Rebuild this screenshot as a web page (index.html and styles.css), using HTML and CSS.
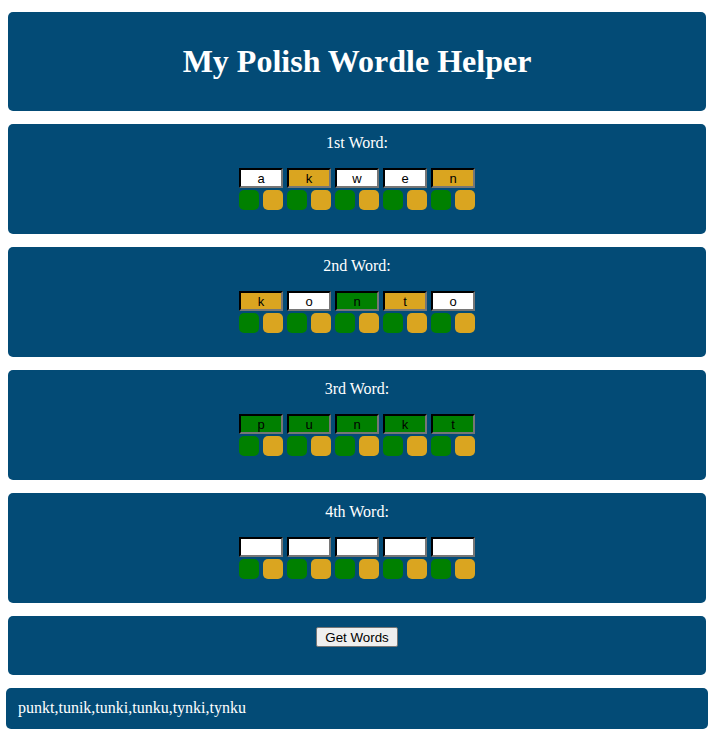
FILE: index.html
```html
<!DOCTYPE html>
<html>
<head>
<meta charset="utf-8">
<title>My Polish Wordle Helper</title>
<link rel="stylesheet" href="styles.css">
</head>
<body>
<main class="page">
  <header class="card header">
    <h1 class="title">My Polish Wordle Helper</h1>
  </header>

  <section class="card word-card">
    <div class="label">1st Word:</div>
    <div class="row">
      <div class="col"><input class="letter white" value="a"><div class="marks"><span class="sq green"></span><span class="sq gold"></span></div></div>
      <div class="col"><input class="letter gold" value="k"><div class="marks"><span class="sq green"></span><span class="sq gold"></span></div></div>
      <div class="col"><input class="letter white" value="w"><div class="marks"><span class="sq green"></span><span class="sq gold"></span></div></div>
      <div class="col"><input class="letter white" value="e"><div class="marks"><span class="sq green"></span><span class="sq gold"></span></div></div>
      <div class="col"><input class="letter gold" value="n"><div class="marks"><span class="sq green"></span><span class="sq gold"></span></div></div>
    </div>
  </section>

  <section class="card word-card">
    <div class="label">2nd Word:</div>
    <div class="row">
      <div class="col"><input class="letter gold" value="k"><div class="marks"><span class="sq green"></span><span class="sq gold"></span></div></div>
      <div class="col"><input class="letter white" value="o"><div class="marks"><span class="sq green"></span><span class="sq gold"></span></div></div>
      <div class="col"><input class="letter green" value="n"><div class="marks"><span class="sq green"></span><span class="sq gold"></span></div></div>
      <div class="col"><input class="letter gold" value="t"><div class="marks"><span class="sq green"></span><span class="sq gold"></span></div></div>
      <div class="col"><input class="letter white" value="o"><div class="marks"><span class="sq green"></span><span class="sq gold"></span></div></div>
    </div>
  </section>

  <section class="card word-card">
    <div class="label">3rd Word:</div>
    <div class="row">
      <div class="col"><input class="letter green" value="p"><div class="marks"><span class="sq green"></span><span class="sq gold"></span></div></div>
      <div class="col"><input class="letter green" value="u"><div class="marks"><span class="sq green"></span><span class="sq gold"></span></div></div>
      <div class="col"><input class="letter green" value="n"><div class="marks"><span class="sq green"></span><span class="sq gold"></span></div></div>
      <div class="col"><input class="letter green" value="k"><div class="marks"><span class="sq green"></span><span class="sq gold"></span></div></div>
      <div class="col"><input class="letter green" value="t"><div class="marks"><span class="sq green"></span><span class="sq gold"></span></div></div>
    </div>
  </section>

  <section class="card word-card">
    <div class="label">4th Word:</div>
    <div class="row">
      <div class="col"><input class="letter white" value=""><div class="marks"><span class="sq green"></span><span class="sq gold"></span></div></div>
      <div class="col"><input class="letter white" value=""><div class="marks"><span class="sq green"></span><span class="sq gold"></span></div></div>
      <div class="col"><input class="letter white" value=""><div class="marks"><span class="sq green"></span><span class="sq gold"></span></div></div>
      <div class="col"><input class="letter white" value=""><div class="marks"><span class="sq green"></span><span class="sq gold"></span></div></div>
      <div class="col"><input class="letter white" value=""><div class="marks"><span class="sq green"></span><span class="sq gold"></span></div></div>
    </div>
  </section>

  <section class="card action-card">
    <button class="get-btn" type="button">Get Words</button>
  </section>

  <section class="card result-card">punkt,tunik,tunki,tunku,tynki,tynku</section>
</main>
</body>
</html>
```

FILE: styles.css
```css
html, body {
  margin: 0;
  padding: 0;
  background: #ffffff;
}

body {
  font-family: "Liberation Serif", "Times New Roman", serif;
  color: #ffffff;
}

.page {
  display: flex;
  flex-direction: column;
  gap: 13px;
  padding: 12px 12px 8px 8px;
}

.card {
  background: #034b76;
  border-radius: 5px;
}

.header {
  padding: 31px 10px;
  text-align: center;
}

.title {
  margin: 0;
  font-size: 32px;
  line-height: 37px;
  font-weight: bold;
}

.word-card {
  display: flex;
  flex-direction: column;
  align-items: center;
  padding: 10px 10px 24px;
}

.label {
  font-size: 16px;
  line-height: 18px;
}

.row {
  display: flex;
  gap: 4px;
  margin-top: 16px;
}

.col {
  display: flex;
  flex-direction: column;
  gap: 2px;
}

.letter {
  box-sizing: border-box;
  width: 44px;
  height: 20px;
  margin: 0;
  padding: 0 2px;
  border: 2px inset #767676;
  border-top-color: #1b1b1b;
  border-left-color: #1b1b1b;
  font-family: "Liberation Sans", Arial, sans-serif;
  font-size: 13px;
  text-align: center;
  color: #000000;
  outline: none;
}

.letter.white { background: #ffffff; }
.letter.gold { background: #daa520; }
.letter.green { background: #008000; }

.marks {
  display: flex;
  gap: 4px;
}

.sq {
  display: block;
  width: 20px;
  height: 20px;
  border-radius: 5px;
}

.sq.green { background: #008000; }
.sq.gold { background: #daa520; }

.action-card {
  display: flex;
  justify-content: center;
  align-items: flex-start;
  padding: 11px 10px 28px;
}

.get-btn {
  font-family: "Liberation Sans", Arial, sans-serif;
  font-size: 13.33px;
  padding: 1px 8px;
  height: 20px;
  background: #efefef;
  color: #000000;
  border: 1px solid #767676;
  border-radius: 2px;
}

.result-card {
  margin: 0 -2px;
  padding: 11px 12px 12px;
  font-size: 16px;
  line-height: 18px;
}
```
